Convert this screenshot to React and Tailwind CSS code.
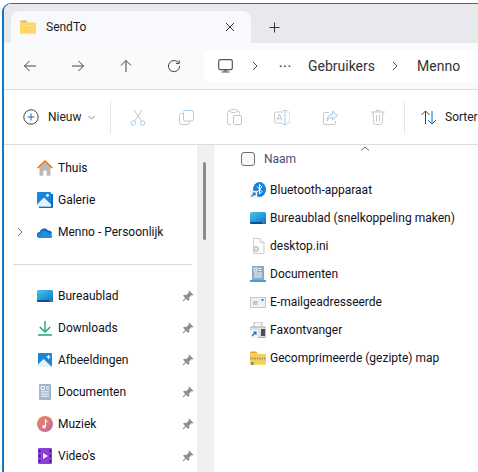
import React from "react";

function S({ w = 16, h = 16, vb, children, className = "" }) {
  return (
    <svg width={w} height={h} viewBox={vb || `0 0 ${w} ${h}`} fill="none" className={`shrink-0 ${className}`}>
      {children}
    </svg>
  );
}

const Folder = () => (
  <S w={16} h={14}>
    <path d="M0 2a1.5 1.5 0 0 1 1.5-1.5H6l2 2H0z" fill="#f0b429" />
    <path d="M0 3h6.5L8 2.5h6.5A1.5 1.5 0 0 1 16 4v8.5a1.2 1.2 0 0 1-1.2 1.2H1.2A1.2 1.2 0 0 1 0 12.5z" fill="#fdd763" />
    <path d="M0 5h16v1H0z" fill="#fce08a" />
  </S>
);

const Close = () => (
  <S w={10} h={10}><path d="M1 1l8 8M9 1L1 9" stroke="#333" strokeWidth="1" /></S>
);
const Plus = () => (
  <S w={11} h={11}><path d="M5.5 0.5v10M0.5 5.5h10" stroke="#333" strokeWidth="1" /></S>
);
const ArrowL = () => (
  <S w={14} h={14}><path d="M13 7H1.5M6.5 2L1.5 7l5 5" stroke="#444" strokeWidth="1" /></S>
);
const ArrowR = () => (
  <S w={14} h={14}><path d="M1 7h11.5M7.5 2l5 5-5 5" stroke="#444" strokeWidth="1" /></S>
);
const ArrowU = () => (
  <S w={14} h={14}><path d="M7 13V1.5M2 6.5l5-5 5 5" stroke="#444" strokeWidth="1" /></S>
);
const Refresh = () => (
  <S w={14} h={14}><path d="M11.8 4.2A5.6 5.6 0 1 0 12.6 7M12.2 1.2v3.2H9" stroke="#444" strokeWidth="1" /></S>
);
const Monitor = () => (
  <S w={15} h={15}>
    <rect x="0.7" y="0.7" width="13.6" height="10" rx="1.6" fill="#fff" stroke="#555" strokeWidth="1.2" />
    <path d="M5.5 11h4v1.5h-4z" fill="#777" />
    <path d="M3.5 13h8" stroke="#555" strokeWidth="1.2" />
  </S>
);
const Chev = ({ c = "#444" }) => (
  <S w={6} h={10}><path d="M1 1l4 4-4 4" stroke={c} strokeWidth="1" /></S>
);

const PlusCircle = () => (
  <S w={16} h={16}>
    <circle cx="8" cy="8" r="7.2" stroke="#444" strokeWidth="1" />
    <path d="M8 4.5v7M4.5 8h7" stroke="#0a6cc4" strokeWidth="1" />
  </S>
);

const Cut = () => (
  <S w={16} h={17}>
    <circle cx="3.3" cy="14" r="2.2" stroke="#a9cde9" strokeWidth="1" />
    <circle cx="12.7" cy="14" r="2.2" stroke="#a9cde9" strokeWidth="1" />
    <path d="M4.5 12.2L12 1M11.5 12.2L4 1" stroke="#c6c6c6" strokeWidth="1" />
  </S>
);
const Copy = () => (
  <S w={15} h={15}>
    <rect x="0.5" y="3.5" width="10" height="11" rx="2" stroke="#c9c9c9" fill="#fff" />
    <rect x="4.5" y="0.5" width="10" height="10.5" rx="2" stroke="#a9cde9" fill="#fff" />
  </S>
);
const Paste = () => (
  <S w={15} h={16}>
    <path d="M3 2H2a1.5 1.5 0 0 0-1.5 1.5v10.5A1.5 1.5 0 0 0 2 15.5h2M10 2h1a1.5 1.5 0 0 1 1.5 1.5V5" stroke="#c9c9c9" />
    <rect x="3.5" y="0.5" width="6" height="3" rx="1" stroke="#c9c9c9" fill="#fff" />
    <rect x="6.5" y="6.5" width="8" height="9" rx="1.5" stroke="#a9cde9" fill="#fff" />
  </S>
);
const Rename = () => (
  <S w={16} h={15}>
    <path d="M9 2H2A1.5 1.5 0 0 0 .5 3.5v8A1.5 1.5 0 0 0 2 13h7M13 2h1.5A1.5 1.5 0 0 1 16 3.5v8a1.5 1.5 0 0 1-1.5 1.5H13" stroke="#c9c9c9" />
    <path d="M9 .5h4M9 14.500h4M11 .5v14" stroke="#a9cde9" />
    <path d="M3 10.500l2.500-6.500 2.500 6.500M4 8.500h3" stroke="#a9cde9" />
  </S>
);
const Share = () => (
  <S w={15} h={15}>
    <path d="M6 2.500H2A1.500 1.500 0 0 0 .5 4v9A1.500 1.500 0 0 0 2 14.500h9a1.500 1.500 0 0 0 1.500-1.500v-2" stroke="#c9c9c9" />
    <path d="M9.500 1l5 4.500-5 4.500V7.500C6.500 7.500 5 9 4 11c0-4 2-6.500 5.500-7z" stroke="#a9cde9" fill="#eef6fc" />
  </S>
);
const Trash = () => (
  <S w={14} h={16}>
    <path d="M0 3h14M5 3V1.500h4V3M2 3l.8 11a1.500 1.500 0 0 0 1.500 1.500h5.400A1.500 1.500 0 0 0 11.200 14L12 3M5.500 6v6.500M8.500 6v6.500" stroke="#c9c9c9" />
  </S>
);
const Sort = () => (
  <S w={16} h={15}>
    <path d="M4.500 14V1M.5 5l4-4 4 4" stroke="#444" />
    <path d="M11 1v13M7 10l4 4 4-4" stroke="#0a6cc4" />
  </S>
);
const Pin = () => (
  <S w={12} h={12} vb="0 0 11 11">
    <path d="M6.500 0.500l4 4-1 .6-1 -.2-2 2.200.2 1.900-1 1-2-2-2.500 2.500-.7-.7 2.500-2.500-2-2 1-1 1.900.2 2.200-2-.2-1z" fill="#8d9094" />
  </S>
);

const Home = () => (
  <S w={16} h={16}>
    <path d="M2.500 7L8 2.500 13.500 7v8a.8.8 0 0 1-.8.8H3.300a.8.8 0 0 1-.8-.8z" fill="#b9b9b9" />
    <path d="M6.300 16v-4.500a1 1 0 0 1 1-1h1.400a1 1 0 0 1 1 1V16z" fill="#fff" />
    <path d="M.7 8L8 1.200 15.300 8" stroke="#e8750a" strokeWidth="1.700" />
  </S>
);
const Gallery = () => (
  <S w={16} h={16}>
    <path d="M14 2h2v13a1 1 0 0 1-1 1H2v-1.500h12z" fill="#0f6cbd" />
    <rect x="0" y="0" width="14" height="14.500" rx="1" fill="#1a86d8" />
    <path d="M0 12.500L7 5.500l7 7V14.500H0z" fill="#e5f2fb" />
    <circle cx="10.500" cy="3.500" r="1.400" fill="#fff" />
  </S>
);
const Cloud = () => (
  <S w={16} h={11}>
    <path d="M4 11H3a3 3 0 0 1-.4-6A4.600 4.600 0 0 1 11 3.500a3.500 3.500 0 0 1 4 3L4 11z" fill="#0f6cbd" />
    <path d="M3.500 11a2.200 2.200 0 0 1 0-4.400c.5-2.600 3-3.400 5-2.300 2 .8 3.600 1.300 4.500 2.400a2.300 2.300 0 0 1 1 4.300z" fill="#1f90e0" />
  </S>
);
const Desktop = ({ w = 16, h = 12 }) => (
  <svg width={w} height={h} viewBox="0 0 16 12" className="shrink-0">
    <defs>
      <linearGradient id="dg" x1="0" y1="0" x2="1" y2="1">
        <stop offset="0" stopColor="#45c8e8" />
        <stop offset="1" stopColor="#1478c8" />
      </linearGradient>
    </defs>
    <path d="M0 1.500A1.500 1.500 0 0 1 1.500 0h13A1.500 1.500 0 0 1 16 1.500V10H0z" fill="url(#dg)" />
    <path d="M0 10h16v1a1 1 0 0 1-1 1H1a1 1 0 0 1-1-1z" fill="#0b4f96" />
    <path d="M12.500 10.800h2.300" stroke="#cfe4f5" strokeWidth=".6" />
  </svg>
);
const Download = () => (
  <S w={14} h={15}>
    <path d="M7 0v10.500M1.800 6L7 11 12.200 6" stroke="#1aa77f" strokeWidth="1.400" />
    <path d="M0 14h14" stroke="#1aa77f" strokeWidth="1.500" />
  </S>
);
const Pics = () => (
  <S w={14} h={14}>
    <rect x="0" y="0" width="14" height="14" rx="1" fill="#1a86d8" />
    <path d="M0 11.500L5.500 6l8.500 8H0z" fill="#e5f2fb" />
    <path d="M10.500 1.500l.8 1.700 1.700.8-1.700.8-.8 1.700-.8-1.700-1.700-.8 1.700-.8z" fill="#fff" />
  </S>
);
const Docs = () => (
  <S w={12} h={16}>
    <rect x="0" y="0" width="12" height="16" rx="1" fill="#9fb6cc" />
    <path d="M2 2.500h3.500v3H2zM7 3h3M7 5h3M2 7.800h8M2 10h8M2 12.200h8" stroke="#fff" strokeWidth=".9" />
  </S>
);
const Music = () => (
  <S w={16} h={16}>
    <defs>
      <linearGradient id="mg" x1="0" y1="0" x2="1" y2="1">
        <stop offset="0" stopColor="#ee8a52" />
        <stop offset="1" stopColor="#c265a8" />
      </linearGradient>
    </defs>
    <circle cx="8" cy="8" r="8" fill="url(#mg)" />
    <path d="M8.500 3.500v7" stroke="#fff" strokeWidth="1.200" />
    <path d="M8.500 3.500c.4 1.500 2 1.500 2.500 3" stroke="#fff" strokeWidth="1" />
    <circle cx="7" cy="10.800" r="1.700" fill="#fff" />
  </S>
);
const Video = () => (
  <S w={14} h={16}>
    <rect width="14" height="16" rx="1" fill="#8c3fd8" />
    <path d="M5 5l5 3-5 3z" fill="#f3e8fb" />
    <path d="M1 2h1.500v2H1zM1 7h1.500v2H1zM1 12h1.500v2H1zM11.500 2H13v2h-1.500zM11.500 7H13v2h-1.500zM11.500 12H13v2h-1.500z" fill="#2e1458" />
  </S>
);

const Bluetooth = () => (
  <S w={16} h={16}>
    <ellipse cx="9.500" cy="7.500" rx="6.500" ry="7.500" fill="#1582e0" />
    <path d="M7 4.500l5 5-2.500 2.500V2.500L12 5l-5 5" stroke="#fff" strokeWidth="1" />
    <rect x="0" y="9" width="7" height="7" fill="#f4f6f9" stroke="#d0d4da" strokeWidth=".5" />
    <path d="M1.500 14.500l3.500-3.500M2.500 11H5v2.500" stroke="#1570c4" strokeWidth="1.200" />
  </S>
);
const IniFile = () => (
  <S w={14} h={16}>
    <path d="M2.500.5H9L13 4.500V15.500H2.500z" fill="#fcfcfc" stroke="#cfcfcf" />
    <path d="M9 .5v4h4" stroke="#cfcfcf" />
    <circle cx="5" cy="11" r="3" fill="#c9c9c9" />
    <circle cx="5" cy="11" r="1" fill="#fff" />
  </S>
);
const FileDocs = () => (
  <S w={16} h={16}>
    <rect x="2" y="0" width="12" height="14" fill="#8ea9c4" />
    <path d="M4 2h3v3H4zM8.500 2.500h3M8.500 4.500h3M4 7h8M4 9h8M4 11h8" stroke="#fff" strokeWidth=".9" />
    <path d="M0 15h16" stroke="#1478c8" strokeWidth="1.400" />
  </S>
);
const Mail = () => (
  <S w={16} h={11}>
    <rect x=".5" y=".5" width="15" height="10" fill="#f0f1f3" stroke="#c6c8cc" />
    <path d="M3 5h5M3 7h4" stroke="#9a9a9a" />
    <rect x="11.500" y="2" width="2" height="2" fill="#2f7fc9" />
  </S>
);
const Fax = () => (
  <S w={16} h={16}>
    <rect x="4" y="0" width="8" height="6" fill="#f5f5f5" stroke="#9aa0a6" strokeWidth=".7" />
    <rect x="0" y="5" width="16" height="10.500" rx="1" fill="#dfe1e4" stroke="#8f9297" strokeWidth=".7" />
    <rect x="11" y="7" width="4" height="7" fill="#4c5056" />
    <rect x="0" y="8" width="8" height="8" fill="#f4f6f9" />
    <path d="M2 14l4-4M3.300 10H6v2.700" stroke="#1570c4" strokeWidth="1.200" />
  </S>
);
const Zip = () => (
  <S w={16} h={14}>
    <path d="M0 2a1.500 1.500 0 0 1 1.500-1.500H6l2 2H0z" fill="#e0a21f" />
    <path d="M0 3h16v9.500a1.200 1.200 0 0 1-1.200 1.200H1.200A1.200 1.200 0 0 1 0 12.500z" fill="#f8cf58" />
    <path d="M0 7.500h16" stroke="#9a9a8c" strokeWidth="2" strokeDasharray="1.500 .8" />
    <rect x="1" y="11" width="2.500" height="3" fill="#8b8b80" />
  </S>
);

function NavBtn({ children }) {
  return <div className="w-[48px] shrink-0 flex items-center justify-center">{children}</div>;
}
function ToolBtn({ children }) {
  return <div className="w-[48px] shrink-0 flex items-center justify-center">{children}</div>;
}

function SideRow({ icon, label, pinned, chevron }) {
  return (
    <div className="h-[32px] flex items-center pl-[13px] pr-[3px]">
      <div className="w-[18px] shrink-0 flex items-center">{chevron && <Chev c="#777" />}</div>
      <div className="w-[20px] shrink-0 flex items-center justify-center mr-[3px]">{icon}</div>
      <span className="flex-1 text-[#111122]">{label}</span>
      {pinned && <Pin />}
    </div>
  );
}

function FileRow({ icon, label }) {
  return (
    <div className="h-[28px] flex items-center pl-[35px]">
      <div className="w-[16px] shrink-0 flex items-center justify-center mr-[4px]">{icon}</div>
      <span className="text-[#111122] whitespace-nowrap">{label}</span>
    </div>
  );
}

export default function App() {
  return (
    <div className="w-[478px] h-[472px] overflow-hidden bg-white pt-[3px] pl-[2px] text-[12px] leading-[16px] font-['Roboto',sans-serif]">
      <div className="h-[469px] border-l-2 border-t border-[#0f78c9] rounded-tl-[9px] overflow-hidden flex flex-col">
        {/* tab strip */}
        <div className="h-[39px] shrink-0 bg-[#e8e9ec] flex items-end pl-[7px]">
          <div className="w-[240px] h-[32px] bg-[#f8f9fc] rounded-t-[8px] flex items-center pl-[9px] pr-[16px]">
            <Folder />
            <span className="ml-[10px] flex-1 text-[#1a1a1a] text-[12px]">SendTo</span>
            <Close />
          </div>
          <div className="h-[32px] ml-[18px] flex items-center"><Plus /></div>
        </div>
        {/* nav bar */}
        <div className="h-[47px] shrink-0 bg-[#f9fafc] border-b border-[#dcdcde] flex items-center pl-[2px]">
          <NavBtn><ArrowL /></NavBtn>
          <NavBtn><ArrowR /></NavBtn>
          <NavBtn><ArrowU /></NavBtn>
          <NavBtn><Refresh /></NavBtn>
          <div className="flex-1 h-[32px] bg-white rounded-l-[6px] ml-[6px] flex items-center pl-[14px] text-[#333] text-[14px] whitespace-nowrap">
            <Monitor />
            <span className="ml-[19px]"><Chev /></span>
            <span className="ml-[21px] font-bold tracking-[1px] leading-none text-[11px]">···</span>
            <span className="ml-[16px]">Gebruikers</span>
            <span className="ml-[17px]"><Chev /></span>
            <span className="ml-[19px]">Menno</span>
          </div>
        </div>
        {/* command bar */}
        <div className="h-[55px] shrink-0 bg-white border-b border-[#dcdcde] flex items-center pl-[19px] whitespace-nowrap text-[#222]">
          <PlusCircle />
          <span className="ml-[9px] w-[34px] shrink-0">Nieuw</span>
          <svg width="7" height="5" viewBox="0 0 7 5" className="ml-[6px] shrink-0"><path d="M.5 1l3 3 3-3" stroke="#888" fill="none" /></svg>
          <div className="w-px h-[33px] bg-[#e6e6e6] ml-[15px] shrink-0" />
          <div className="ml-[3px] flex shrink-0">
            <ToolBtn><Cut /></ToolBtn>
            <ToolBtn><Copy /></ToolBtn>
            <ToolBtn><Paste /></ToolBtn>
            <ToolBtn><Rename /></ToolBtn>
            <ToolBtn><Share /></ToolBtn>
            <ToolBtn><Trash /></ToolBtn>
          </div>
          <div className="w-px h-[33px] bg-[#e6e6e6] ml-[2px] shrink-0" />
          <span className="ml-[16px] shrink-0"><Sort /></span>
          <span className="ml-[8px]">Sorteren</span>
        </div>
        {/* body */}
        <div className="flex-1 flex min-h-0">
          <div className="w-[193px] shrink-0 bg-white pt-[7px]">
            <SideRow icon={<Home />} label="Thuis" />
            <SideRow icon={<Gallery />} label="Galerie" />
            <SideRow icon={<Cloud />} label="Menno - Persoonlijk" chevron />
            <div className="h-[32px] flex items-center pl-[9px] pr-[5px]">
              <div className="w-full h-px bg-[#d9d9d9]" />
            </div>
            <SideRow icon={<Desktop />} label="Bureaublad" pinned />
            <SideRow icon={<Download />} label="Downloads" pinned />
            <SideRow icon={<Pics />} label="Afbeeldingen" pinned />
            <SideRow icon={<Docs />} label="Documenten" pinned />
            <SideRow icon={<Music />} label="Muziek" pinned />
            <SideRow icon={<Video />} label="Video's" pinned />
          </div>
          <div className="w-[16px] shrink-0 bg-[#f0f0f3] pt-[17px] pl-[6px]">
            <div className="w-[3px] h-[78px] bg-[#8b8b8b] rounded-full" />
          </div>
          <div className="w-[2px] shrink-0 bg-[#f5f5f7]" />
          <div className="flex-1 bg-white min-w-0">
            <div className="h-[27px] flex items-center pl-[26px] relative">
              <div className="w-[14px] h-[14px] rounded-[3px] border border-[#6e6e6e] bg-[#f7f7f7]" />
              <span className="ml-[9px] text-[#4a4a7a]">Naam</span>
              <svg width="10" height="5" viewBox="0 0 10 5" className="absolute left-[145px] top-[1px]"><path d="M1 4.500l4-3.500 4 3.500" stroke="#666" fill="none" /></svg>
            </div>
            <div className="pt-[4px]">
              <FileRow icon={<Bluetooth />} label="Bluetooth-apparaat" />
              <FileRow icon={<Desktop />} label="Bureaublad (snelkoppeling maken)" />
              <FileRow icon={<IniFile />} label="desktop.ini" />
              <FileRow icon={<FileDocs />} label="Documenten" />
              <FileRow icon={<Mail />} label="E-mailgeadresseerde" />
              <FileRow icon={<Fax />} label="Faxontvanger" />
              <FileRow icon={<Zip />} label="Gecomprimeerde (gezipte) map" />
            </div>
          </div>
        </div>
      </div>
    </div>
  );
}
